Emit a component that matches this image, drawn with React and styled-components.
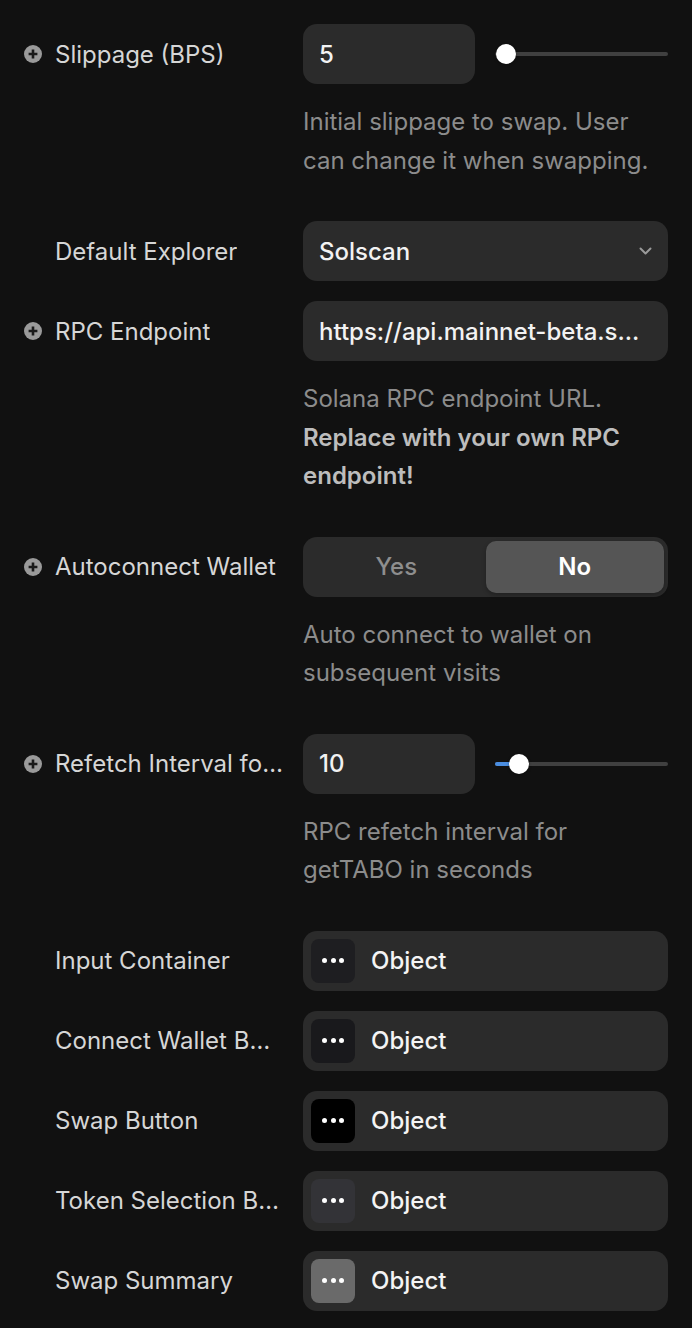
import styled, { createGlobalStyle } from "styled-components";

const GlobalStyle = createGlobalStyle`
  body {
    margin: 0;
    background: #111111;
    font-family: Inter, "Noto Sans", sans-serif;
    -webkit-font-smoothing: antialiased;
  }
`;

const Panel = styled.div`
  width: 692px;
  min-height: 1328px;
  box-sizing: border-box;
  padding: 24px 24px 0;
  display: flex;
  flex-direction: column;
  gap: 20px;
  background: #111111;
`;

const Row = styled.div`
  display: grid;
  grid-template-columns: 259px 365px;
  column-gap: 20px;
`;

const Label = styled.div`
  grid-column: 1;
  grid-row: 1;
  height: 60px;
  display: flex;
  align-items: center;
  gap: 13px;
  padding-left: ${(p) => (p.$icon ? "0" : "31px")};
  overflow: hidden;
`;

const LabelText = styled.span`
  font-size: 24px;
  color: #d6d6d6;
  white-space: nowrap;
  overflow: hidden;
  text-overflow: ellipsis;
  min-width: 0;
`;

const Control = styled.div`
  grid-column: 2;
  grid-row: 1;
  height: 60px;
  display: flex;
  align-items: center;
  gap: 20px;
`;

const Field = styled.div`
  height: 60px;
  box-sizing: border-box;
  width: ${(p) => p.$width || "100%"};
  flex-shrink: 0;
  background: #2b2b2b;
  border-radius: 14px;
  padding: 0 16px;
  display: flex;
  align-items: center;
  justify-content: space-between;
  font-size: 24px;
  font-weight: 500;
  color: #f2f2f2;
  white-space: nowrap;
  overflow: hidden;
`;

const FieldValue = styled.span`
  overflow: hidden;
  text-overflow: ellipsis;
`;

const Track = styled.div`
  position: relative;
  flex: 1;
  height: 4px;
  border-radius: 2px;
  background: #404040;
`;

const Fill = styled.div`
  position: absolute;
  left: 0;
  top: 0;
  bottom: 0;
  border-radius: 2px;
  background: #4a8de0;
`;

const Knob = styled.div`
  position: absolute;
  top: 50%;
  width: 20px;
  height: 20px;
  margin: -10px 0 0 -10px;
  border-radius: 50%;
  background: #ffffff;
  box-shadow: 0 1px 3px rgba(0, 0, 0, 0.4);
`;

const Segmented = styled.div`
  width: 100%;
  height: 60px;
  box-sizing: border-box;
  padding: 4px;
  border-radius: 14px;
  background: #2b2b2b;
  display: grid;
  grid-template-columns: 1fr 1fr;
`;

const Segment = styled.div`
  display: flex;
  align-items: center;
  justify-content: center;
  border-radius: 10px;
  font-size: 24px;
  font-weight: ${(p) => (p.$active ? 600 : 500)};
  color: ${(p) => (p.$active ? "#ffffff" : "#8e8e8e")};
  background: ${(p) => (p.$active ? "#555555" : "transparent")};
  box-shadow: ${(p) => (p.$active ? "0 2px 4px rgba(0,0,0,0.25)" : "none")};
`;

const Description = styled.div`
  grid-column: 2;
  grid-row: 2;
  margin: 19px 0 21px;
  font-size: 24px;
  line-height: 38.5px;
  color: #8c8c8c;

  b {
    font-weight: 600;
    color: #bdbdbd;
  }
`;

const ObjectField = styled.div`
  height: 60px;
  width: 100%;
  box-sizing: border-box;
  background: #2b2b2b;
  border-radius: 14px;
  padding: 0 8px;
  display: flex;
  align-items: center;
  gap: 16px;
  font-size: 24px;
  font-weight: 500;
  color: #f4f4f4;
`;

const Swatch = styled.div`
  width: 44px;
  height: 44px;
  border-radius: 8px;
  background: ${(p) => p.$color};
  display: flex;
  align-items: center;
  justify-content: center;
  gap: 3.5px;
`;

const Dot = styled.span`
  width: 5px;
  height: 5px;
  border-radius: 50%;
  background: #ffffff;
`;

const PlusIcon = () => (
  <svg width="18" height="18" viewBox="0 0 18 18" style={{ flexShrink: 0 }}>
    <circle cx="9" cy="9" r="9" fill="#9a9a9a" />
    <path d="M9 4.6v8.8M4.6 9h8.8" stroke="#1a1a1a" strokeWidth="2.6" />
  </svg>
);

const Chevron = () => (
  <svg width="13" height="8" viewBox="0 0 13 8">
    <path d="M1.5 1.5l5 5 5-5" fill="none" stroke="#9a9a9a" strokeWidth="2" strokeLinecap="round" strokeLinejoin="round" />
  </svg>
);

const Slider = ({ pos, fill }) => (
  <Track>
    {fill && <Fill style={{ width: pos }} />}
    <Knob style={{ left: pos }} />
  </Track>
);

const Prop = ({ label, icon, children, desc }) => (
  <Row>
    <Label $icon={icon}>
      {icon && <PlusIcon />}
      <LabelText>{label}</LabelText>
    </Label>
    <Control>{children}</Control>
    {desc && <Description>{desc}</Description>}
  </Row>
);

const objects = [
  { label: "Input Container", color: "#1e1e21" },
  { label: "Connect Wallet Button", color: "#19191c" },
  { label: "Swap Button", color: "#000000" },
  { label: "Token Selection Button", color: "#333337" },
  { label: "Swap Summary", color: "#6a6a6a" },
];

const App = () => {
  return (
    <>
      <GlobalStyle />
      <Panel>
        <Prop
          icon
          label="Slippage (BPS)"
          desc="Initial slippage to swap. User can change it when swapping."
        >
          <Field $width="172px">5</Field>
          <Slider pos="11px" />
        </Prop>

        <Prop label="Default Explorer">
          <Field>
            <FieldValue>Solscan</FieldValue>
            <Chevron />
          </Field>
        </Prop>

        <Prop
          icon
          label="RPC Endpoint"
          desc={
            <>
              Solana RPC endpoint URL.
              <br />
              <b>Replace with your own RPC endpoint!</b>
            </>
          }
        >
          <Field>
            <FieldValue>https://api.mainnet-beta.s...</FieldValue>
          </Field>
        </Prop>

        <Prop
          icon
          label="Autoconnect Wallet"
          desc="Auto connect to wallet on subsequent visits"
        >
          <Segmented>
            <Segment>Yes</Segment>
            <Segment $active>No</Segment>
          </Segmented>
        </Prop>

        <Prop
          icon
          label="Refetch Interval for getTABO"
          desc="RPC refetch interval for getTABO in seconds"
        >
          <Field $width="172px">10</Field>
          <Slider pos="24px" fill />
        </Prop>

        {objects.map((o) => (
          <Prop key={o.label} label={o.label}>
            <ObjectField>
              <Swatch $color={o.color}>
                <Dot />
                <Dot />
                <Dot />
              </Swatch>
              Object
            </ObjectField>
          </Prop>
        ))}
      </Panel>
    </>
  );
};

export default App;
